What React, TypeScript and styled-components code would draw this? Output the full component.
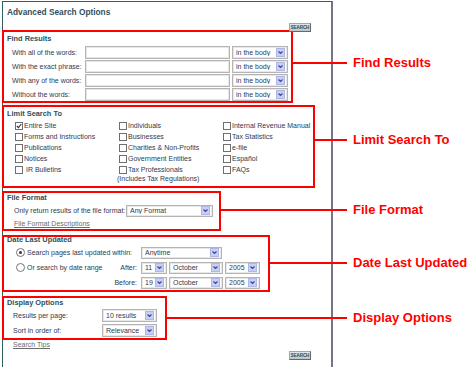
import React from 'react'
import styled, { createGlobalStyle } from 'styled-components'

const GlobalStyle = createGlobalStyle`
  html, body { margin: 0; padding: 0; overflow: hidden; background: #fff; }
  body { font-family: "Liberation Sans", Arial, sans-serif; color: #2e3a52; }
`

const Page = styled.div`
  width: 468px;
  height: 367px;
  box-sizing: border-box;
  padding: 1px 0 0 2px;
`

const Panel = styled.div`
  width: 331px;
  box-sizing: border-box;
  border: 1px solid #2f5f60;
  border-right: 2px solid #74748e;
  padding-bottom: 7px;
  display: flex;
  flex-direction: column;
`

const Title = styled.div`
  padding-left: 4px;
  height: 20px;
  line-height: 20px;
  font-size: 8.3px;
  font-weight: bold;
  color: #2f4f5c;
`

const ButtonRow = styled.div<{ $mt: number; $mb: number }>`
  display: flex;
  justify-content: flex-end;
  padding-right: 20px;
  margin-top: ${p => p.$mt}px;
  margin-bottom: ${p => p.$mb}px;
  height: 9px;
`

const SearchButton = styled.span`
  position: relative;
  z-index: 2;
  width: 22px;
  height: 9px;
  box-sizing: border-box;
  background: linear-gradient(#e2e8e8, #b9c6c6);
  border: 1px solid #9aa8a8;
  border-right-color: #5d6b6b;
  border-bottom-color: #5d6b6b;
  font-size: 4.5px;
  font-weight: bold;
  line-height: 7px;
  text-align: center;
  color: #1d4a58;
  letter-spacing: -0.1px;
`

const Section = styled.div<{ $mt: number }>`
  display: flex;
  align-items: flex-start;
  width: 464px;
  margin-left: -1px;
  margin-top: ${p => p.$mt}px;
`

const RedBox = styled.div<{ $w: number }>`
  flex-shrink: 0;
  width: ${p => p.$w}px;
  box-sizing: border-box;
  border: 2px solid #f00;
`

const Callout = styled.div<{ $top: number }>`
  flex: 1;
  display: flex;
  align-items: center;
  margin-top: ${p => p.$top}px;
`

const Leader = styled.div`
  flex: 1;
  height: 2px;
  background: #f00;
`

const CalloutText = styled.span`
  width: 113px;
  margin-left: 6px;
  font-size: 13px;
  font-weight: bold;
  line-height: 16px;
  color: #f00;
  white-space: nowrap;
`

const BoxTitle = styled.div<{ $h: number; $mt?: number }>`
  height: ${p => p.$h}px;
  line-height: ${p => p.$h}px;
  margin-top: ${p => p.$mt ?? 0}px;
  padding-left: 3px;
  font-size: 7.4px;
  font-weight: bold;
  color: #2f4f5c;
`

const FieldRow = styled.div<{ $h: number; $pl: number }>`
  display: flex;
  align-items: center;
  height: ${p => p.$h}px;
  padding-left: ${p => p.$pl}px;
  font-size: 7px;
`

const FieldLabel = styled.span<{ $w: number }>`
  width: ${p => p.$w}px;
  flex-shrink: 0;
  white-space: nowrap;
`

const TextInput = styled.div`
  width: 145px;
  height: 13px;
  box-sizing: border-box;
  border: 1px solid #b4b4b4;
  box-shadow: inset 0 0 0 1px #e6e6e6;
  background: #fff;
  margin-right: 2px;
`

const SelectBox = styled.div<{ $w: number; $h?: number }>`
  width: ${p => p.$w}px;
  height: ${p => p.$h ?? 13}px;
  flex-shrink: 0;
  box-sizing: border-box;
  border: 1px solid #b4b4b4;
  box-shadow: inset 0 0 0 1px #e8e8e8;
  background: #fff;
  display: flex;
  align-items: center;
  padding: 0 2px 0 3px;
  font-size: 7px;
  color: #2e3a52;
`

const SelectValue = styled.span`
  flex: 1;
  white-space: nowrap;
  overflow: hidden;
`

const ArrowBtn = styled.span`
  width: 9px;
  height: 9px;
  box-sizing: border-box;
  background: #c8cff3;
  border: 1px solid #aeb6e2;
  display: flex;
  align-items: center;
  justify-content: center;
`

const Select = ({ w, h, value }: { w: number; h?: number; value: string }) => (
  <SelectBox $w={w} $h={h}>
    <SelectValue>{value}</SelectValue>
    <ArrowBtn>
      <svg width="7" height="7" viewBox="0 0 7 7">
        <polyline points="1.5,2.5 3.5,4.5 5.5,2.5" fill="none" stroke="#3b47a6" strokeWidth="1.2" />
      </svg>
    </ArrowBtn>
  </SelectBox>
)

const CheckGrid = styled.div`
  display: grid;
  grid-template-columns: 104px 104px 1fr;
  grid-auto-rows: 11px;
  padding-left: 11px;
  font-size: 7px;
`

const CheckItem = styled.div`
  display: flex;
  align-items: center;
  white-space: nowrap;
`

const Box = styled.span<{ $on?: boolean }>`
  width: 8px;
  height: 8px;
  box-sizing: border-box;
  border: 1px solid #6f6f6f;
  background: #fff;
  margin-right: 1px;
  display: flex;
  align-items: center;
  justify-content: center;
`

const Note = styled.div`
  grid-column: 2;
  height: 7px;
  line-height: 7px;
  margin-left: -2px;
  font-size: 7px;
  white-space: nowrap;
`

const Link = styled.div<{ $h: number; $pl: number }>`
  height: ${p => p.$h}px;
  line-height: ${p => p.$h}px;
  padding-left: ${p => p.$pl}px;
  font-size: 7px;
  color: #6a6a6a;
  text-decoration: underline;
`

const DateRow = styled.div`
  display: flex;
  align-items: center;
  height: 15px;
  padding-left: 11px;
  font-size: 7px;
`

const DateLeft = styled.div`
  width: 122px;
  margin-right: 4px;
  display: flex;
  align-items: center;
  white-space: nowrap;
`

const Radio = styled.span<{ $on?: boolean }>`
  width: 9px;
  height: 9px;
  box-sizing: border-box;
  margin: 0 2px 0 1px;
  border: 1px solid #777;
  border-radius: 50%;
  background: #fff;
  display: flex;
  align-items: center;
  justify-content: center;
  &::after {
    content: '';
    width: 3px;
    height: 3px;
    border-radius: 50%;
    background: ${p => (p.$on ? '#333' : 'transparent')};
  }
`

const RightText = styled.span`
  margin-left: auto;
`

const Selects = styled.div`
  display: flex;
  gap: 2px;
`

const findRows = ['With all of the words:', 'With the exact phrase:', 'With any of the words:', 'Without the words:']

const checks = [
  ['Entire Site', true], ['Individuals'], ['Internal Revenue Manual'],
  ['Forms and Instructions'], ['Businesses'], ['Tax Statistics'],
  ['Publications'], ['Charities & Non-Profits'], ['e-file'],
  ['Notices'], ['Government Entities'], ['Español'],
  ['\u00a0IR Bulletins'], ['Tax Professionals'], ['FAQs'],
] as [string, boolean?][]

const DateSelects = ({ day }: { day: string }) => (
  <Selects>
    <Select w={26} h={12} value={day} />
    <Select w={54} h={12} value="October" />
    <Select w={35} h={12} value="2005" />
  </Selects>
)

const App = () => {
  return (
    <Page>
      <GlobalStyle />
      <Panel>
        <Title>Advanced Search Options</Title>
        <ButtonRow $mt={1} $mb={-2}>
          <SearchButton>SEARCH</SearchButton>
        </ButtonRow>

        <Section $mt={0}>
          <RedBox $w={291}>
            <BoxTitle $h={13}>Find Results</BoxTitle>
            {findRows.map(r => (
              <FieldRow key={r} $h={14} $pl={8}>
                <FieldLabel $w={73}>{r}</FieldLabel>
                <TextInput />
                <Select w={56} value="in the body" />
              </FieldRow>
            ))}
          </RedBox>
          <Callout $top={25}>
            <Leader />
            <CalloutText>Find Results</CalloutText>
          </Callout>
        </Section>

        <Section $mt={2}>
          <RedBox $w={313}>
            <BoxTitle $h={13}>Limit Search To</BoxTitle>
            <CheckGrid>
              {checks.map(([label, on]) => (
                <CheckItem key={label}>
                  <Box>
                    {on && (
                      <svg width="6" height="6" viewBox="0 0 6 6">
                        <polyline points="0.8,3 2.4,4.7 5.3,1" fill="none" stroke="#333" strokeWidth="1.1" />
                      </svg>
                    )}
                  </Box>
                  {label}
                </CheckItem>
              ))}
              <Note>(Includes Tax Regulations)</Note>
            </CheckGrid>
          </RedBox>
          <Callout $top={27}>
            <Leader />
            <CalloutText>Limit Search To</CalloutText>
          </Callout>
        </Section>

        <Section $mt={3}>
          <RedBox $w={219}>
            <BoxTitle $h={10}>File Format</BoxTitle>
            <FieldRow $h={15} $pl={10}>
              <FieldLabel $w={112}>Only return results of the file format:</FieldLabel>
              <Select w={87} h={12} value="Any Format" />
            </FieldRow>
            <Link $h={11} $pl={10}>File Format Descriptions</Link>
          </RedBox>
          <Callout $top={11}>
            <Leader />
            <CalloutText>File Format</CalloutText>
          </Callout>
        </Section>

        <Section $mt={4}>
          <RedBox $w={268}>
            <BoxTitle $h={9} $mt={-2}>Date Last Updated</BoxTitle>
            <DateRow style={{ marginTop: 1 }}>
              <DateLeft>
                <Radio $on />
                Search pages last updated within:
              </DateLeft>
              <Select w={81} h={12} value="Anytime" />
            </DateRow>
            <DateRow>
              <DateLeft>
                <Radio />
                Or search by date range
                <RightText>After:</RightText>
              </DateLeft>
              <DateSelects day="11" />
            </DateRow>
            <DateRow>
              <DateLeft>
                <RightText>Before:</RightText>
              </DateLeft>
              <DateSelects day="19" />
            </DateRow>
          </RedBox>
          <Callout $top={20}>
            <Leader />
            <CalloutText>Date Last Updated</CalloutText>
          </Callout>
        </Section>

        <Section $mt={4}>
          <RedBox $w={165}>
            <BoxTitle $h={10}>Display Options</BoxTitle>
            <FieldRow $h={15} $pl={9}>
              <FieldLabel $w={89}>Results per page:</FieldLabel>
              <Select w={55} value="10 results" />
            </FieldRow>
            <FieldRow $h={15} $pl={9}>
              <FieldLabel $w={89}>Sort in order of:</FieldLabel>
              <Select w={55} value="Relevance" />
            </FieldRow>
          </RedBox>
          <Callout $top={14}>
            <Leader />
            <CalloutText>Display Options</CalloutText>
          </Callout>
        </Section>

        <Link $h={9} $pl={10}>Search Tips</Link>
        <ButtonRow $mt={2} $mb={0}>
          <SearchButton>SEARCH</SearchButton>
        </ButtonRow>
      </Panel>
    </Page>
  )
}

export default App
